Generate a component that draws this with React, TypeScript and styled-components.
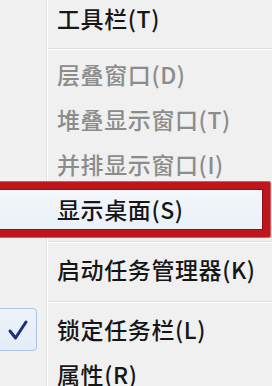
import React from 'react';
import styled, { createGlobalStyle } from 'styled-components';

const GlobalStyle = createGlobalStyle`
  html, body {
    margin: 0;
    padding: 0;
    background: #f0f0f0;
    overflow: hidden;
  }
  body {
    font-family: "Noto Sans CJK SC", "Noto Sans", sans-serif;
  }
`;

type MenuEntry =
  | { kind: 'item'; label: string; disabled?: boolean; checked?: boolean; marked?: boolean }
  | { kind: 'sep'; wide?: boolean };

const entries: MenuEntry[] = [
  { kind: 'item', label: '工具栏(T)' },
  { kind: 'sep' },
  { kind: 'item', label: '层叠窗口(D)', disabled: true },
  { kind: 'item', label: '堆叠显示窗口(T)', disabled: true },
  { kind: 'item', label: '并排显示窗口(I)', disabled: true },
  { kind: 'item', label: '显示桌面(S)', marked: true },
  { kind: 'sep', wide: true },
  { kind: 'item', label: '启动任务管理器(K)' },
  { kind: 'sep', wide: true },
  { kind: 'item', label: '锁定任务栏(L)', checked: true },
  { kind: 'item', label: '属性(R)' },
];

const App: React.FC = () => {
  return (
    <>
      <GlobalStyle />
      <Menu>
        {entries.map((entry, i) =>
          entry.kind === 'sep' ? (
            <Separator key={i} $wide={entry.wide} />
          ) : (
            <Item key={i} $marked={entry.marked}>
              <Gutter>
                {entry.checked && (
                  <CheckBox>
                    <svg width="22" height="22" viewBox="0 0 22 22">
                      <path
                        d="M3 12 L8.5 19 L19 3"
                        fill="none"
                        stroke="#1f2f80"
                        strokeWidth="3"
                        strokeLinecap="round"
                        strokeLinejoin="round"
                      />
                    </svg>
                  </CheckBox>
                )}
              </Gutter>
              <Label $disabled={entry.disabled}>{entry.label}</Label>
              {entry.marked && <RedFrame />}
            </Item>
          )
        )}
      </Menu>
    </>
  );
};

const Menu = styled.ul`
  list-style: none;
  margin: -4px 0 0 0;
  padding: 0;
  width: 272px;
  height: 404px;
  background: linear-gradient(
    to right,
    #f1f1f1 46px,
    #e0e1e1 46px,
    #e0e1e1 47px,
    #ffffff 47px,
    #ffffff 48px,
    #f0f0f0 48px
  );
`;

const Separator = styled.li<{ $wide?: boolean }>`
  height: 0;
  margin: ${(p) => (p.$wide ? '9px 0 4px 48px' : '7px 0 2px 48px')};
  border-top: 1px solid #dcdcdc;
  border-bottom: 1px solid #ffffff;
`;

const Item = styled.li<{ $marked?: boolean }>`
  position: relative;
  display: grid;
  grid-template-columns: 48px 1fr;
  align-items: center;
  height: 45px;
  background: ${(p) =>
    p.$marked ? 'linear-gradient(to bottom, #f4f7fb, #e9f0f8)' : 'transparent'};
`;

const Gutter = styled.div`
  height: 100%;
  display: flex;
  align-items: center;
`;

const CheckBox = styled.div`
  box-sizing: border-box;
  width: 41px;
  height: 43px;
  margin-left: -4px;
  border: 1px solid #a9c4e6;
  border-radius: 4px;
  background: linear-gradient(to bottom, #eef3fa, #e3ecf7);
  display: flex;
  align-items: center;
  justify-content: center;
  padding-left: 3px;
`;

const Label = styled.span<{ $disabled?: boolean }>`
  padding-left: 9px;
  font-size: 23px;
  font-weight: 500;
  letter-spacing: 0.6px;
  line-height: 1;
  white-space: nowrap;
  color: ${(p) => (p.$disabled ? '#8c8c8c' : '#161616')};
`;

const RedFrame = styled.div`
  position: absolute;
  top: -5px;
  bottom: -5px;
  left: -12px;
  right: 2px;
  border: 7px solid #bd161d;
  border-radius: 1px;
  box-shadow: inset 0 0 0 1px #8f1015, 0 0 0 1px #d85a5e;
  pointer-events: none;
`;

export default App;
